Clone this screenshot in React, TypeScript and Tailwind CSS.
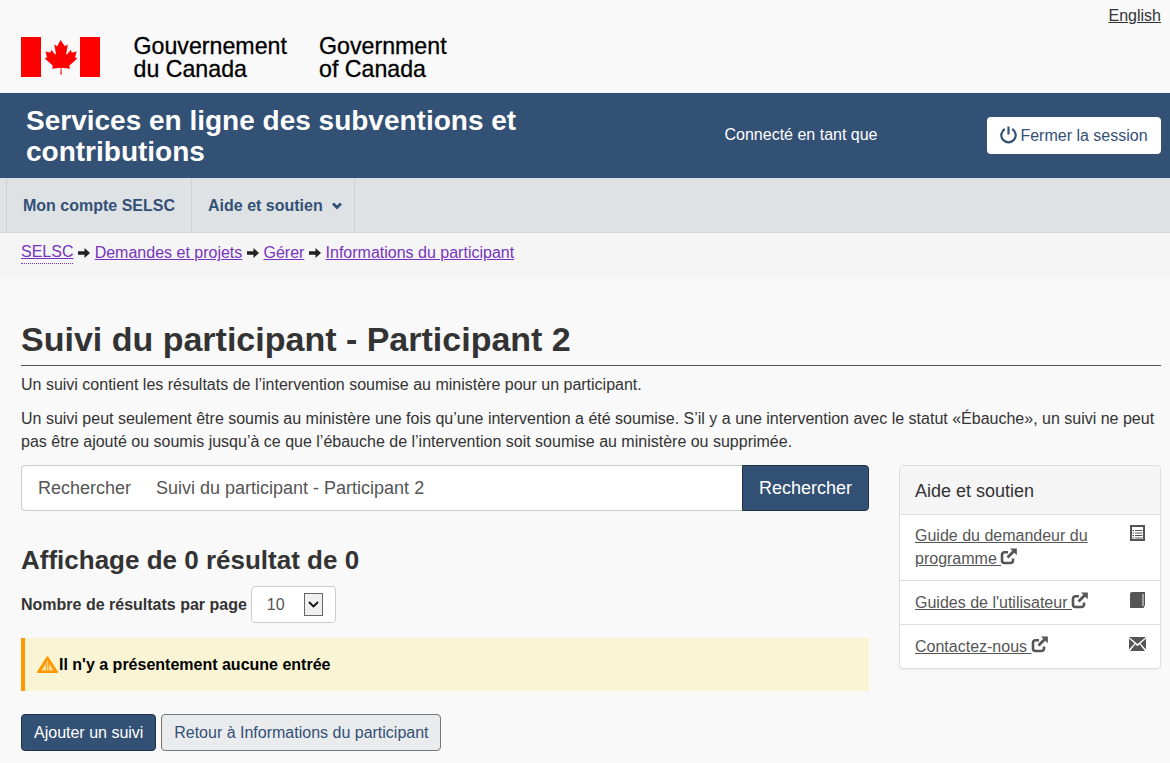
import React from "react";

function Flag() {
  return (
    <svg width="79" height="40" viewBox="0 0 79 40" className="block">
      <rect width="20" height="40" fill="#f00" />
      <rect x="59" width="20" height="40" fill="#f00" />
      <g transform="translate(39.5 3) scale(0.92 1) translate(-39.5 -3)">
        <path
          fill="#f00"
          d="M39.5 3l-3 5.5c-.3.6-.9.5-1.500.2l-2.200-1.100 1.600 8.600c.3 1.600-.7 1.600-1.200.9l-3.800-4.300-.6 2.200c-.1.300-.4.600-.9.500l-4.800-1 1.300 4.600c.3 1 .5 1.400-.3 1.700l-1.700.8 8.300 6.700c.3.300.5.700.4 1.100l-.7 2.400 8.600-1c.3 0 .7.200.7.500l-.4 6.200h1.600l-.4-6.200c0-.3.4-.5.7-.5l8.600 1-.7-2.400c-.1-.4.1-.8.4-1.100l8.300-6.700-1.700-.8c-.8-.3-.6-.7-.3-1.700l1.300-4.600-4.800 1c-.5.1-.8-.2-.9-.5l-.6-2.200-3.800 4.300c-.5.700-1.500.7-1.200-.9l1.600-8.600-2.200 1.100c-.6.300-1.200.4-1.500-.2z"
        />
      </g>
    </svg>
  );
}

function Ext() {
  return (
    <svg width="17" height="17" viewBox="0 0 17 17" className="ml-[-1px] inline-block align-[-1px]" fill="none" stroke="#555">
      <path strokeWidth="2.600" d="M8 4.300H4.500a2.500 2.500 0 0 0-2.500 2.500v5.700a2.500 2.500 0 0 0 2.500 2.500h6a2.500 2.500 0 0 0 2.500-2.500v-2" />
      <path strokeWidth="2.800" d="M7.500 9.500L13.500 3.500" />
      <path fill="#555" stroke="none" d="M10 .5h6.800v6.800z" />
    </svg>
  );
}

function Arrow() {
  return (
    <svg width="12" height="10" viewBox="0 0 12 10" className="mt-[1px]" fill="#222">
      <path d="M0 3.200h6.500V0L12 5 6.500 10V6.800H0z" />
    </svg>
  );
}

export default function App() {
  return (
    <div className="min-h-[763px] w-[1170px] overflow-hidden bg-[#f9f9f9] font-['Liberation_Sans',Arial,sans-serif] text-[16px] leading-[23px] text-[#333]">
      <header className="relative h-[93px] px-[21px]">
        <a className="absolute right-[9px] top-[4px] text-[#333] underline">English</a>
        <div className="flex items-start pt-[37px]">
          <Flag />
          <div className="ml-[33.500px] mt-[-2px] w-[185.500px] text-[23.200px] leading-[23px] text-black [-webkit-text-stroke:0.3px_black]">
            Gouvernement<br />du Canada
          </div>
          <div className="mt-[-2px] text-[23.200px] leading-[23px] text-black [-webkit-text-stroke:0.3px_black]">
            Government<br />of Canada
          </div>
        </div>
      </header>

      <div className="flex h-[85px] items-center bg-[#335075] pl-[26px] pr-[9px] text-white">
        <div className="w-[570px] text-[28px] font-bold leading-[31px]">Services en ligne des subventions et contributions</div>
        <div className="mb-[3px] ml-[128.500px]">Connecté en tant que</div>
        <button className="mb-[1px] ml-auto flex h-[37px] w-[174px] items-center justify-center rounded-[4px] bg-white text-[#335075]">
          <svg width="17" height="18" viewBox="0 0 17 18" fill="none" stroke="#335075" strokeWidth="2.200" className="mr-[3px]">
            <path d="M8.500 0.500v8" />
            <path d="M4.800 3a7.200 7.200 0 1 0 7.400 0" />
          </svg>
          Fermer la session
        </button>
      </div>

      <nav className="flex h-[55px] border-b border-[#d4d6da] bg-[#dfe2e5] pl-[6px] font-bold text-[#335075]">
        <div className="flex items-center border-x border-[#cdd0d5] px-[16px]">Mon compte SELSC</div>
        <div className="flex items-center border-r border-[#cdd0d5] pl-[16px] pr-[12px]">
          Aide et soutien
          <svg width="10" height="8" viewBox="0 0 10 8" className="ml-[9px] mt-[2px]" fill="none" stroke="#335075" strokeWidth="2.800"><path d="M1 1.500l4 4 4-4" /></svg>
        </div>
      </nav>

      <div className="flex h-[45px] items-center gap-[4.600px] bg-[#f5f5f5] pb-[6px] pl-[21px]">
        <a className="border-b border-dotted border-[#7834bc] leading-[22px] text-[#7834bc] underline">SELSC</a><Arrow />
        <a className="text-[#7834bc] underline">Demandes et projets</a><Arrow />
        <a className="text-[#7834bc] underline">Gérer</a><Arrow />
        <a className="text-[#7834bc] underline">Informations du participant</a>
      </div>

      <main className="pl-[21px] pr-[9px] pt-[42px]">
        <h1 className="border-b border-[#555] pb-[6px] text-[34px] font-bold leading-[39px]">Suivi du participant - Participant 2</h1>
        <p className="mt-[7px]">Un suivi contient les résultats de l’intervention soumise au ministère pour un participant.</p>
        <p className="mt-[11px]">Un suivi peut seulement être soumis au ministère une fois qu’une intervention a été soumise. S’il y a une intervention avec le statut «Ébauche», un suivi ne peut pas être ajouté ou soumis jusqu’à ce que l’ébauche de l’intervention soit soumise au ministère ou supprimée.</p>

        <div className="mt-[12px] flex gap-[30px]">
          <div className="w-[848px]">
            <div className="flex h-[46px] text-[18px]">
              <div className="flex flex-1 items-center rounded-l-[4px] border border-r-0 border-[#ccc] bg-white pl-[16px] text-[#555]">
                <span className="w-[118px]">Rechercher</span>
                <span>Suivi du participant - Participant 2</span>
              </div>
              <div className="flex w-[127px] items-center justify-center rounded-r-[4px] border border-[#1f3047] bg-[#335075] text-white">Rechercher</div>
            </div>
            <h2 className="mt-[33px] text-[26px] font-bold leading-[33px]">Affichage de 0 résultat de 0</h2>
            <div className="mt-[9px] flex items-center text-[16px] font-bold">
              Nombre de résultats par page
              <div className="ml-[4px] flex h-[37px] w-[85px] items-center rounded-[4px] border border-[#ccc] bg-white pl-[15px] font-normal text-[#555]">
                10
                <span className="ml-[19px] flex h-[23px] w-[19px] items-center justify-center border border-[#666] bg-[#f0f0f0]">
                  <svg width="11" height="7" viewBox="0 0 11 7" fill="none" stroke="#111" strokeWidth="1.800"><path d="M1 1l4.500 4.500L10 1" /></svg>
                </span>
              </div>
            </div>
            <div className="mt-[15px] flex h-[53px] items-center border-l-4 border-[#ff9900] bg-[#f9f4d4] pl-[12px] font-bold text-black">
              <svg width="21" height="17" viewBox="0 0 21 17" className="mr-[1px]"><path d="M10.500 1.200L20 16H1z" fill="#ff9900" stroke="#ff9900" strokeWidth="2" strokeLinejoin="round" /><path d="M10.500 4.500L16.500 14.500H4.500z" fill="#fcdca0" /><path d="M8.700 6.500h1.400l-.2 5.500H9zM11 6.500h1.400L12 12h-.8zM8.800 12.700h1.300V14H8.800zM11 12.700h1.300V14H11z" fill="#ff9900" /></svg>
              Il n'y a présentement aucune entrée
            </div>
            <div className="mt-[23px] flex gap-[5px]">
              <button className="h-[37px] rounded-[4px] border border-[#1f3047] bg-[#335075] px-[12px] text-white">Ajouter un suivi</button>
              <button className="h-[37px] w-[280px] rounded-[4px] border border-[#767676] bg-[#eaebed] text-[#335075]">Retour à Informations du participant</button>
            </div>
          </div>

          <aside className="h-[204px] w-[262px] overflow-hidden rounded-[4px] border border-[#ddd] bg-white shadow-[0_1px_1px_rgba(0,0,0,0.05)]">
            <div className="flex h-[49px] items-center border-b border-[#ddd] bg-[#f5f5f5] pl-[15px] pt-[2px] text-[18px]">Aide et soutien</div>
            <div className="flex h-[66px] justify-between border-b border-[#ddd] pl-[15px] pr-[15px] pt-[9px]">
              <a className="w-[190px] text-[#555] underline">Guide du demandeur du programme <Ext /></a>
              <svg width="15" height="16" viewBox="0 0 15 16" fill="none" stroke="#555" className="mt-[1px]"><rect x="1" y="1" width="13" height="14" strokeWidth="2" /><path d="M2.500 5.500h10M2.500 8h10M2.500 10.500h10M2.500 13h10" strokeDasharray="1.500 1 7.500 0" /></svg>
            </div>
            <div className="flex h-[44px] justify-between border-b border-[#ddd] pl-[15px] pr-[15px] pt-[10px]">
              <a className="text-[#555] underline">Guides de l'utilisateur <Ext /></a>
              <svg width="15" height="16" viewBox="0 0 15 16" fill="#555" className="mt-[1px]"><path d="M2 0h13v13l-1.500 3H1a1 1 0 0 1-1-1V2a2 2 0 0 1 2-2z" /><path d="M13 2v12" stroke="#f2f2f2" strokeWidth="1" /></svg>
            </div>
            <div className="flex h-[43px] justify-between pl-[15px] pr-[14px] pt-[12px]">
              <a className="mt-[-2px] text-[#555] underline">Contactez-nous <Ext /></a>
              <svg width="17" height="14" viewBox="0 0 17 14" fill="#555"><path d="M0 0h17L8.500 7zM0 1.500l5.500 5L0 12.500zM17 1.500l-5.500 5 5.500 6zM6.300 7.300l2.200 2 2.200-2L16 14H1z" /></svg>
            </div>
          </aside>
        </div>
      </main>
    </div>
  );
}
